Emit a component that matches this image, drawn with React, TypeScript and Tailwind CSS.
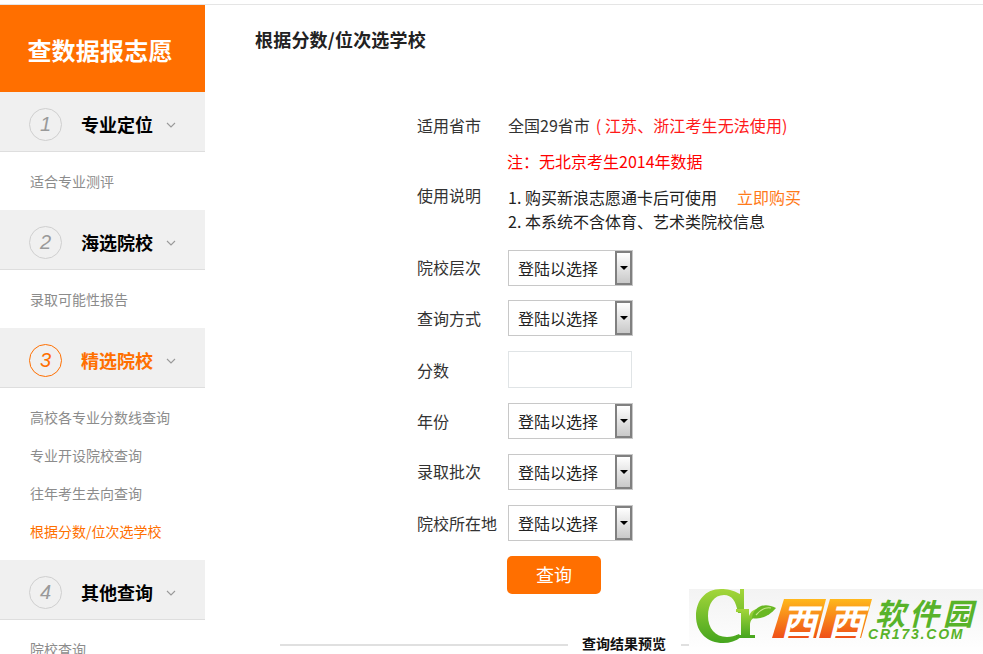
const font = { fontFamily: '"Noto Sans CJK SC", "Liberation Sans", sans-serif' };

const sections = [
  { num: "1", title: "专业定位", items: ["适合专业测评"] },
  { num: "2", title: "海选院校", items: ["录取可能性报告"] },
  { num: "3", title: "精选院校", active: true, items: ["高校各专业分数线查询", "专业开设院校查询", "往年考生去向查询", "根据分数/位次选学校"] },
  { num: "4", title: "其他查询", items: ["院校查询"] },
];

function Chevron() {
  return (
    <svg width="10" height="6" viewBox="0 0 10 6" className="ml-[13px] mt-[2px]">
      <path d="M1 1l4 4 4-4" fill="none" stroke="#999" strokeWidth="1.1" />
    </svg>
  );
}

function Sidebar() {
  return (
    <aside className="w-[205px] shrink-0">
      <div className="h-[87px] bg-[#ff6f00] flex items-center justify-center pt-[2px] pr-[5px] text-white text-[24px] tracking-[0.2px] leading-none font-bold">
        查数据报志愿
      </div>
      {sections.map((s) => (
        <div key={s.num}>
          <div className="h-[60px] bg-[#f0f0f0] border-b border-[#dedede] flex items-center pl-[29px] pt-[5px]">
            <div
              className={`w-[33px] h-[33px] rounded-full border flex items-center justify-center text-[20px] italic ${
                s.active ? "border-[#ff6f00] text-[#ff6f00]" : "border-[#cfcfcf] text-[#999]"
              }`}
              style={{ fontFamily: '"Liberation Sans", sans-serif' }}
            >
              {s.num}
            </div>
            <span className={`ml-[19px] text-[18px] font-bold leading-none ${s.active ? "text-[#ff6f00]" : "text-black"}`}>
              {s.title}
            </span>
            <Chevron />
          </div>
          <ul className="pt-[10px] pb-[10px] pl-[30px] border-b border-[#dedede] last:border-0">
            {s.items.map((item, i) => (
              <li
                key={item}
                className={`h-[38px] leading-[38px] text-[14px] ${
                  s.active && i === s.items.length - 1 ? "text-[#ff6f00]" : "text-[#8c8c8c]"
                }`}
              >
                {item}
              </li>
            ))}
          </ul>
        </div>
      ))}
    </aside>
  );
}

function FakeSelect() {
  return (
    <div className="w-[125px] h-[36px] border border-[#c8c8c8] flex items-center justify-between">
      <span className="pl-[9px] text-[16px] text-[#222] leading-none">登陆以选择</span>
      <span className="w-[17px] h-[34px] border-2 border-[#808080] bg-gradient-to-b from-white to-[#c9c9c9] flex items-center justify-center">
        <span className="w-0 h-0 border-x-[4px] border-x-transparent border-t-[4px] border-t-black" />
      </span>
    </div>
  );
}

function Row({ label, className, labelClass = "", children }: { label: string; className: string; labelClass?: string; children: React.ReactNode }) {
  return (
    <div className={`flex items-center ${className}`}>
      <div className={`w-[91px] shrink-0 text-[16px] text-[#333] ${labelClass}`}>{label}</div>
      {children}
    </div>
  );
}

function Watermark() {
  return (
    <div className="absolute right-0 bottom-0 w-[294px] h-[65px] bg-gradient-to-b from-[#f3f3f3] to-white overflow-hidden">
      <svg width="294" height="65" viewBox="0 0 294 65" className="absolute inset-0">
        <defs>
          <linearGradient id="g" x1="0" y1="0" x2="0" y2="1">
            <stop offset="0" stopColor="#a4d63a" />
            <stop offset="1" stopColor="#45a51e" />
          </linearGradient>
          <linearGradient id="o" x1="0" y1="0" x2="0" y2="1">
            <stop offset="0" stopColor="#ffb81c" />
            <stop offset="1" stopColor="#ef4f18" />
          </linearGradient>
        </defs>
        <path
          d="M51 5C44 1 38 0 32 0C16 0 7 12 7 27C7 44 19 54 34 54C41 54 47 52 52 48L50 45C46 47 42 48 38 48C26 48 19 39 19 27C19 15 25 6 35 6C43 6 47 12 49 24L55 24L55 0L51 0Z"
          fill="url(#g)"
        />
        <path
          d="M47 20L60 20L60 27C62 22 65 20 69 20L69 28C64 28 61 31 61 36L61 46L66 46L66 49L47 49L47 46L52 46L52 23L47 23Z"
          fill="url(#g)"
        />
        <path d="M63 29C64 19 74 12 87 19C80 27 72 31 63 29Z" fill="#69b823" />
        <path d="M67 26C72 20 77 18 82 19" fill="none" stroke="#c8e88a" strokeWidth="1.2" />
        <path d="M95 10H137L127 49H83Z" fill="url(#o)" />
        <path d="M141 10H183L172 49H130Z" fill="url(#o)" />
      </svg>
      <span className="absolute left-[92px] top-[9px] text-[36px] leading-[42px] font-bold italic text-white">西</span>
      <span className="absolute left-[139px] top-[9px] text-[36px] leading-[42px] font-bold italic text-white">西</span>
      <span className="absolute left-[186px] top-[9px] text-[30px] leading-[28px] font-bold italic tracking-[4px] text-[#58b32a] whitespace-nowrap">
        软件园
      </span>
      <span
        className="absolute left-[179px] top-[38px] text-[14px] leading-[14px] font-bold italic tracking-[1.8px] text-[#58b32a] whitespace-nowrap"
        style={{ fontFamily: '"Liberation Sans", sans-serif' }}
      >
        CR173.COM
      </span>
    </div>
  );
}

export default function App() {
  return (
    <div className="relative h-[654px] overflow-hidden bg-white pt-[4px]" style={font}>
      <div className="border-t border-[#e5e5e5] flex">
        <Sidebar />
        <main className="flex-1 min-w-0">
          <h1 className="pl-[50px] pt-[21px] text-[18px] leading-[26px] font-bold tracking-[0.2px] text-[#222]">根据分数/位次选学校</h1>
          <div className="pl-[212px] pt-[56px]">
            <Row label="适用省市" className="h-[36px] pb-[2px]">
              <span className="text-[16px] text-[#333]">全国29省市</span>
              <span className="text-[16px] text-[#ff1a1a] ml-[6px] tracking-[0.1px]">( 江苏、浙江考生无法使用)</span>
            </Row>
            <div className="h-[36px] pl-[90px] pb-[2px] flex items-center text-[16px] text-[#ff0000]">注：无北京考生2014年数据</div>
            <div className="flex mt-[6px]">
              <div className="w-[91px] shrink-0 text-[16px] leading-[20px] -mt-[1px] text-[#333]">使用说明</div>
              <div className="text-[16px] leading-[24px] -mt-[1px] text-[#222]">
                <p>
                  1. 购买新浪志愿通卡后可使用<span className="ml-[20px] text-[#ff7a1a]">立即购买</span>
                </p>
                <p>2. 本系统不含体育、艺术类院校信息</p>
              </div>
            </div>
            <Row label="院校层次" labelClass="pb-[2px]" className="mt-[17px]"><FakeSelect /></Row>
            <Row label="查询方式" className="mt-[14px]"><FakeSelect /></Row>
            <Row label="分数" className="mt-[15px]">
              <input className="w-[124px] h-[37px] border border-[#e0e4e6] outline-none" />
            </Row>
            <Row label="年份" className="mt-[15px]"><FakeSelect /></Row>
            <Row label="录取批次" labelClass="pb-[2px]" className="mt-[15px]"><FakeSelect /></Row>
            <Row label="院校所在地" className="mt-[15px]"><FakeSelect /></Row>
            <button className="block ml-[90px] mt-[15px] w-[94px] h-[38px] pb-[2px] rounded-[5px] bg-[#ff6f00] text-white text-[18px]">查询</button>
          </div>
          <div className="flex items-center ml-[75px] mt-[39px] h-[24px]">
            <div className="w-[288px] h-[2px] bg-[#e0e0e0]" />
            <span className="ml-[14px] pb-[3px] text-[14px] font-bold text-[#111]">查询结果预览</span>
            <div className="ml-[15px] flex-1 h-[2px] bg-[#e0e0e0]" />
          </div>
        </main>
      </div>
      <Watermark />
    </div>
  );
}
